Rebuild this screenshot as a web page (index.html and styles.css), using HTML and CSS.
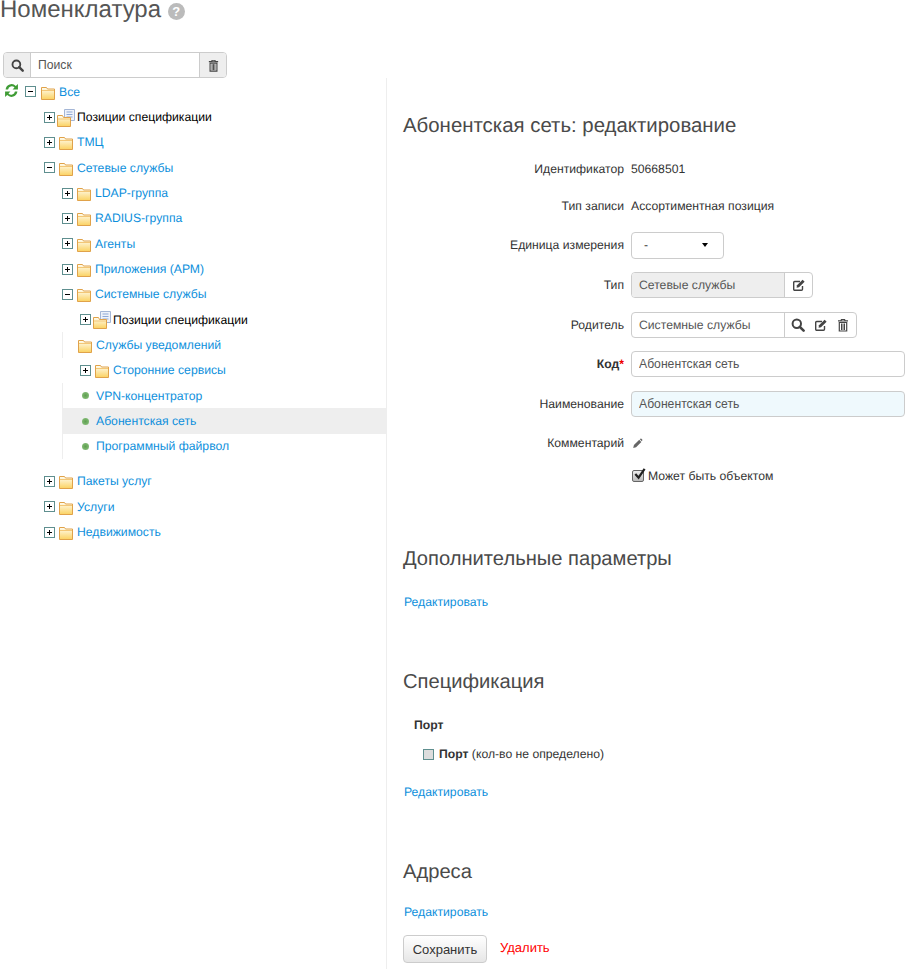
FILE: index.html
```html
<!DOCTYPE html>
<html lang="ru">
<head>
  <meta charset="UTF-8" />
  <title>Номенклатура</title>
  <link rel="stylesheet" href="styles.css">
</head>
<body>
  <svg class="sprite" xmlns="http://www.w3.org/2000/svg">
    <defs>
      <linearGradient id="fold" x1="0" y1="0" x2="0" y2="1"><stop offset="0" stop-color="#fffdf2"/><stop offset="1" stop-color="#fbd261"/></linearGradient>
    </defs>
    <symbol id="i-search" viewBox="0 0 14 14"><circle cx="5.8" cy="5.8" r="4.2" fill="none" stroke="currentColor" stroke-width="2"/><path d="M8.8 8.8l3.8 3.8" stroke="currentColor" stroke-width="2.6" stroke-linecap="round"/></symbol>
    <symbol id="i-trash" viewBox="0 0 14 14"><path d="M5 1h4l.5 1.200H12v1.300H2V2.200h2.500zM5.800 2v.4h2.400V2z" fill="currentColor" fill-rule="evenodd"/><path d="M3.300 4.500h7.400V13H3.300z" fill="none" stroke="currentColor" stroke-width="1.200"/><path d="M5.500 5.500v6.500M7 5.500v6.500M8.500 5.500v6.500" stroke="currentColor"/></symbol>
    <symbol id="i-edit" viewBox="0 0 14 14"><path d="M10.500 8v3.300a1 1 0 0 1-1 1H2.700a1 1 0 0 1-1-1V4.500a1 1 0 0 1 1-1H8" fill="none" stroke="currentColor" stroke-width="1.400"/><path d="M5 7.300L10.600 1.700l2 2L7 9.300l-2.400.4z" fill="currentColor"/></symbol>
    <symbol id="i-pencil" viewBox="0 0 14 14"><path d="M2.500 9l6.700-6.700 2.700 2.700L5.200 11.700 1.500 12.700z" fill="currentColor"/><path d="M10 1.500l.7-.500a1 1 0 0 1 1.300 0l1 1a1 1 0 0 1 0 1.300l-.6.700z" fill="currentColor"/></symbol>
    <symbol id="i-folder" viewBox="0 0 14 14"><path d="M.5 1.500V13.500H13.500V3H6.500L5.500 1.500z" fill="url(#fold)" stroke="#e0a24a"/><path d="M1 4.500h12" stroke="#f3c777"/></symbol>
    <symbol id="i-refresh" viewBox="0 0 14 14"><path d="M1.500 6A5.600 5.600 0 0 1 11 2.700L13 1v5H8l1.800-1.800A3.500 3.500 0 0 0 3.800 6z" fill="#3f9c35"/><path d="M12.500 8A5.600 5.600 0 0 1 3 11.300L1 13V8h5l-1.800 1.800A3.500 3.500 0 0 0 10.200 8z" fill="#3f9c35"/></symbol>
    <symbol id="i-spec" viewBox="0 0 19 19"><path d="M7.500 1.500h10v11h-10z" fill="#eef2fa" stroke="#a4b6d6"/><path d="M9.500 4h6M9.500 6.500h6M9.500 9h6" stroke="#8fa9d6"/><path d="M.5 7.500V18.500H13.500V9.500H6.500L5.500 7.500z" fill="url(#fold)" stroke="#e0a24a"/><path d="M1 11h12" stroke="#f3c777"/></symbol>
    <symbol id="i-check" viewBox="0 0 14 14"><path d="M2.500 6.500L6 10.500 12.500 1" fill="none" stroke="#222" stroke-width="2.400"/></symbol>
  </svg>

  <h1 class="page-title">Номенклатура <span class="help">?</span></h1>

  <div class="layout">
    <div class="side">
      <div class="search">
        <span class="addon"><svg class="ic ic-xs"><use href="#i-search"/></svg></span>
        <input class="search-input" type="text" value="Поиск">
        <span class="addon addon-end"><svg class="ic ic-s"><use href="#i-trash"/></svg></span>
      </div>

      <div class="tree">
        <div class="row root">
          <svg class="refresh"><use href="#i-refresh"/></svg>
          <span class="tg minus"></span><svg class="folder"><use href="#i-folder"/></svg><a>Все</a>
        </div>
        <ul class="lvl">
          <li class="row"><span class="tg plus"></span><svg class="spec"><use href="#i-spec"/></svg><a class="dark">Позиции спецификации</a></li>
          <li class="row"><span class="tg plus"></span><svg class="folder"><use href="#i-folder"/></svg><a>ТМЦ</a></li>
          <li class="row"><span class="tg minus"></span><svg class="folder"><use href="#i-folder"/></svg><a>Сетевые службы</a></li>
          <li>
            <ul class="lvl">
              <li class="row"><span class="tg plus"></span><svg class="folder"><use href="#i-folder"/></svg><a>LDAP-группа</a></li>
              <li class="row"><span class="tg plus"></span><svg class="folder"><use href="#i-folder"/></svg><a>RADIUS-группа</a></li>
              <li class="row"><span class="tg plus"></span><svg class="folder"><use href="#i-folder"/></svg><a>Агенты</a></li>
              <li class="row"><span class="tg plus"></span><svg class="folder"><use href="#i-folder"/></svg><a>Приложения (АРМ)</a></li>
              <li class="row"><span class="tg minus"></span><svg class="folder"><use href="#i-folder"/></svg><a>Системные службы</a></li>
              <li>
                <ul class="lvl leafs">
                  <li class="row"><span class="tg plus"></span><svg class="spec"><use href="#i-spec"/></svg><a class="dark">Позиции спецификации</a></li>
                  <li class="row lined"><svg class="folder"><use href="#i-folder"/></svg><a>Службы уведомлений</a></li>
                  <li class="row"><span class="tg plus"></span><svg class="folder"><use href="#i-folder"/></svg><a>Сторонние сервисы</a></li>
                  <li class="row lined"><span class="dot"></span><a>VPN-концентратор</a></li>
                  <li class="row lined current"><span class="dot"></span><a>Абонентская сеть</a></li>
                  <li class="row lined"><span class="dot"></span><a>Программный файрвол</a></li>
                </ul>
              </li>
            </ul>
          </li>
          <li class="row after"><span class="tg plus"></span><svg class="folder"><use href="#i-folder"/></svg><a>Пакеты услуг</a></li>
          <li class="row"><span class="tg plus"></span><svg class="folder"><use href="#i-folder"/></svg><a>Услуги</a></li>
          <li class="row"><span class="tg plus"></span><svg class="folder"><use href="#i-folder"/></svg><a>Недвижимость</a></li>
        </ul>
      </div>
    </div>

    <div class="content">
      <h2 class="first">Абонентская сеть: редактирование</h2>

      <div class="form">
        <div class="field f-id"><label>Идентификатор</label><span>50668501</span></div>
        <div class="field f-kind"><label>Тип записи</label><span>Ассортиментная позиция</span></div>
        <div class="field f-unit"><label>Единица измерения</label><div class="select"><span>-</span><i class="caret"></i></div></div>
        <div class="field f-type"><label>Тип</label>
          <div class="group">
            <span class="group-val readonly">Сетевые службы</span>
            <span class="group-btns"><svg class="ic"><use href="#i-edit"/></svg></span>
          </div>
        </div>
        <div class="field f-input"><label>Родитель</label>
          <div class="group">
            <span class="group-val">Системные службы</span>
            <span class="group-btns group-btns-3"><svg class="ic"><use href="#i-search"/></svg><svg class="ic"><use href="#i-edit"/></svg><svg class="ic"><use href="#i-trash"/></svg></span>
          </div>
        </div>
        <div class="field f-input"><label><b>Код</b><em>*</em></label><input class="text" type="text" value="Абонентская сеть"></div>
        <div class="field f-input"><label>Наименование</label><input class="text filled" type="text" value="Абонентская сеть"></div>
        <div class="field f-note"><label>Комментарий</label><svg class="ic ic-pen"><use href="#i-pencil"/></svg></div>
        <div class="field f-check"><label></label><span class="check-wrap"><span class="check"><svg class="check-mark"><use href="#i-check"/></svg></span>Может быть объектом</span></div>
      </div>

      <h2 class="params">Дополнительные параметры</h2>
      <a class="edit-link edit-1">Редактировать</a>

      <h2 class="spec-title">Спецификация</h2>
      <div class="spec-name">Порт</div>
      <div class="spec-item"><span class="box"></span><b>Порт</b> (кол-во не определено)</div>
      <a class="edit-link edit-2">Редактировать</a>

      <h2 class="addr">Адреса</h2>
      <a class="edit-link edit-3">Редактировать</a>

      <div class="actions">
        <button class="btn" type="button">Сохранить</button>
        <a class="del">Удалить</a>
      </div>
    </div>
  </div>
</body>
</html>
```

FILE: styles.css
```css
body {
  margin: 0;
  height: 969px;
  overflow: hidden;
  font-family: "Liberation Sans", Arial, sans-serif;
  font-size: 12.2px;
  color: #333;
  background: #fff;
  text-rendering: geometricPrecision;
}
a {
  color: #0d8fdc;
  text-decoration: none;
}
ul {
  list-style: none;
  margin: 0;
  padding: 0;
}
.sprite {
  position: absolute;
  width: 0;
  height: 0;
}
.ic {
  width: 14px;
  height: 14px;
  color: #444;
  flex: none;
}
.ic-s {
  width: 13px;
  height: 13px;
}
.ic-xs {
  width: 13px;
  height: 13px;
}
.ic-pen {
  width: 11px;
  height: 11px;
  color: #666;
  margin-left: 1px;
}

.page-title {
  margin: 0;
  height: 52px;
  font-size: 24px;
  line-height: 20px;
  font-weight: normal;
  color: #555;
}
.help {
  display: inline-block;
  width: 17px;
  height: 17px;
  border-radius: 50%;
  background: #bbb;
  color: #fff;
  font-size: 13px;
  font-weight: bold;
  line-height: 17px;
  text-align: center;
  vertical-align: 1px;
}

.layout {
  display: flex;
  height: 917px;
}
.side {
  width: 386px;
  flex: none;
  box-sizing: border-box;
  padding-left: 3px;
}
.content {
  flex: 1;
  min-width: 0;
  margin-top: 26px;
  padding-left: 16px;
  border-left: 1px solid #eee;
}

/* search box */
.search {
  display: flex;
  width: 224px;
  height: 26px;
  box-sizing: border-box;
  border: 1px solid #ccc;
  border-radius: 4px;
  overflow: hidden;
}
.addon {
  width: 26px;
  flex: none;
  display: flex;
  align-items: center;
  justify-content: center;
  background: #eee;
  border-right: 1px solid #ccc;
}
.addon-end {
  width: 26px;
  border-right: 0;
  border-left: 1px solid #ccc;
}
.search-input {
  flex: 1;
  min-width: 0;
  border: 0;
  padding: 0 7px;
  font: inherit;
  color: #555;
}

/* tree */
.tree {
  margin-left: -3px;
  padding-top: 1.13px;
}
.row {
  display: flex;
  align-items: center;
  height: 25.33px;
  line-height: 14px;
}
.root {
  position: relative;
  padding-left: 25px;
}
.refresh {
  position: absolute;
  left: 4px;
  top: 4px;
  width: 15px;
  height: 15px;
}
.tg {
  width: 9px;
  height: 9px;
  flex: none;
  margin-right: 4px;
  border: 1px solid #5f8f8f;
  background: linear-gradient(#000, #000) center / 5px 1px no-repeat;
}
.root .tg {
  margin-right: 5px;
}
.plus {
  background:
    linear-gradient(#000, #000) center / 5px 1px no-repeat,
    linear-gradient(#000, #000) center / 1px 5px no-repeat;
}
.folder {
  width: 14px;
  height: 14px;
  flex: none;
  margin-right: 4px;
  position: relative;
  top: 1px;
}
.spec {
  width: 19px;
  height: 19px;
  flex: none;
  margin-left: -2px;
  margin-right: 1px;
}
.dark {
  color: #000;
}
.lvl {
  padding-left: 44px;
}
.lvl .lvl {
  padding-left: 18px;
}
.lvl .lvl .lvl {
  padding-left: 0;
}
.leafs .row {
  padding-left: 18px;
}
.leafs .lined {
  border-left: 1px solid #eee;
  padding-left: 15px;
}
.leafs .lined .dot {
  margin-left: 4px;
}
.dot {
  width: 7px;
  height: 7px;
  flex: none;
  margin-right: 7px;
  border-radius: 50%;
  background: radial-gradient(#5f9f50, #8fc583);
}
.current {
  background: #eee;
}
.after {
  margin-top: 9.7px;
}

/* form */
h2 {
  margin: 0;
  font-size: 20.15px;
  line-height: 26px;
  font-weight: normal;
  color: #4a4a4a;
}
.first {
  padding-top: 35px;
  font-size: 20.4px;
}
.field {
  display: flex;
  align-items: center;
  height: 26px;
}
.field label {
  width: 221px;
  flex: none;
  margin-right: 7px;
  text-align: right;
}
.field b {
  font-weight: bold;
}
.field em {
  color: #e00;
  font-style: normal;
  font-weight: bold;
}
.f-id {
  margin-top: 17px;
}
.f-kind {
  margin-top: 11px;
}
.f-unit {
  margin-top: 13px;
}
.f-type {
  margin-top: 14.3px;
}
.f-input {
  margin-top: 13.5px;
}
.f-note {
  margin-top: 13.5px;
}
.f-check {
  margin-top: 6.8px;
}
.select {
  width: 93px;
  height: 27px;
  box-sizing: border-box;
  border: 1px solid #ccc;
  border-radius: 4px;
  display: flex;
  align-items: center;
  justify-content: space-between;
  padding: 0 15px 0 12px;
}
.caret {
  border-left: 3px solid transparent;
  border-right: 3px solid transparent;
  border-top: 4px solid #000;
}
.group {
  display: flex;
  height: 26px;
  box-sizing: border-box;
  border: 1px solid #ccc;
  border-radius: 4px;
  overflow: hidden;
}
.group-val {
  width: 153px;
  padding-left: 7px;
  box-sizing: border-box;
  line-height: 24px;
  color: #555;
  border-right: 1px solid #ccc;
}
.readonly {
  background: #eee;
}
.group-btns {
  display: flex;
  align-items: center;
  padding: 0 6px 0 7px;
}
.group-btns-3 {
  gap: 8.5px;
  padding: 0 6px;
}
.text {
  flex: 1;
  min-width: 0;
  height: 26px;
  box-sizing: border-box;
  border: 1px solid #ccc;
  border-radius: 4px;
  padding: 0 7px;
  font: inherit;
  color: #555;
}
.filled {
  background: #eff9fd;
}
.check-wrap {
  display: flex;
  align-items: center;
  gap: 4px;
  margin-left: 1px;
}
.check {
  width: 10px;
  height: 10px;
  position: relative;
  border: 1px solid #666;
  border-radius: 2px;
  background: linear-gradient(#eee, #bbb);
}
.check-mark {
  position: absolute;
  left: 0;
  top: -3px;
  width: 13px;
  height: 13px;
}

/* lower sections */
.params {
  margin-top: 57px;
}
.edit-link {
  display: block;
  margin-left: 1px;
  line-height: 16px;
}
.edit-1 {
  margin-top: 22px;
}
.spec-title {
  margin-top: 59px;
}
.spec-name {
  margin: 22px 0 0 11px;
  font-weight: bold;
  line-height: 16px;
}
.spec-item {
  display: flex;
  align-items: center;
  margin: 13px 0 0 20px;
  line-height: 16px;
  white-space: pre;
}
.box {
  width: 9px;
  height: 9px;
  margin-right: 5px;
  background: #ddd;
  border: 1px solid #5f8f8f;
}
.edit-2 {
  margin-top: 22px;
}
.addr {
  margin-top: 59px;
}
.edit-3 {
  margin-top: 19px;
}
.actions {
  display: flex;
  align-items: center;
  gap: 13px;
  margin-top: 15px;
}
.btn {
  width: 84px;
  height: 28px;
  padding: 0;
  border: 1px solid #ccc;
  border-radius: 4px;
  background: linear-gradient(#fff, #e6e6e6);
  font: inherit;
  font-size: 13px;
  color: #333;
}
.del {
  color: #f00;
  font-size: 13px;
  margin-bottom: 3px;
}
```
